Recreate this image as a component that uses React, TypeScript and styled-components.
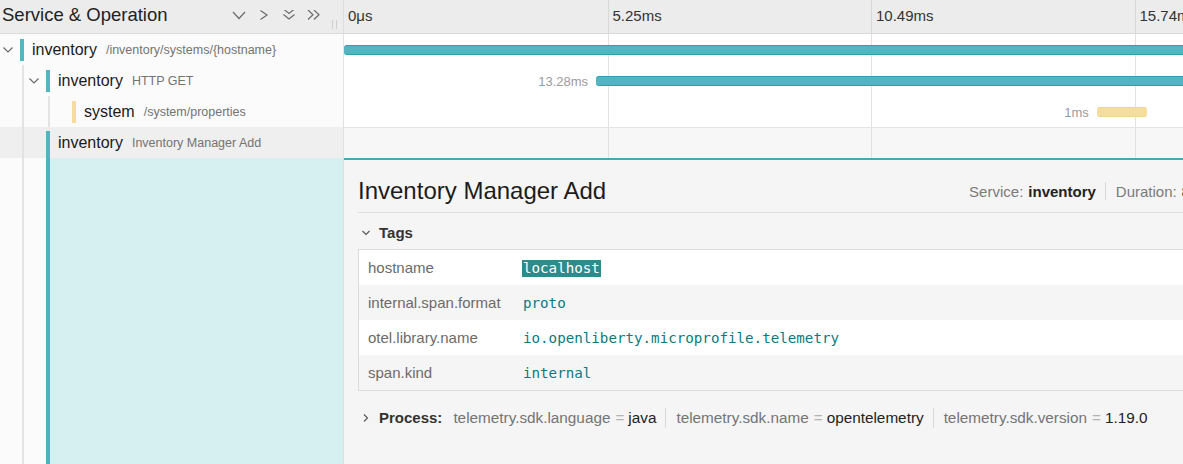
import React from "react";
import styled, { createGlobalStyle } from "styled-components";

const NAME_WIDTH = 344;
const TIMELINE_WIDTH = 1054;
const TOTAL_MS = 20.99;

const COLORS: Record<string, { bar: string; border: string }> = {
  inventory: { bar: "#52b5c0", border: "#27a4b0" },
  system: { bar: "#f4dd9e", border: "#f0d68f" },
};

interface Span {
  service: string;
  operation: string;
  depth: number;
  hasChildren: boolean;
  start: number;
  duration: number;
  label: string;
  selected?: boolean;
}

const spans: Span[] = [
  { service: "inventory", operation: "/inventory/systems/{hostname}", depth: 0, hasChildren: true, start: 0, duration: 20.99, label: "20.99ms" },
  { service: "inventory", operation: "HTTP GET", depth: 1, hasChildren: true, start: 5.02, duration: 13.28, label: "13.28ms" },
  { service: "system", operation: "/system/properties", depth: 2, hasChildren: false, start: 14.99, duration: 1, label: "1ms" },
  { service: "inventory", operation: "Inventory Manager Add", depth: 1, hasChildren: false, start: 20.3, duration: 0.08, label: "82μs", selected: true },
];

const tags = [
  { key: "hostname", value: "localhost", highlight: true },
  { key: "internal.span.format", value: "proto" },
  { key: "otel.library.name", value: "io.openliberty.microprofile.telemetry" },
  { key: "span.kind", value: "internal" },
];

const processTags = [
  { key: "telemetry.sdk.language", value: "java" },
  { key: "telemetry.sdk.name", value: "opentelemetry" },
  { key: "telemetry.sdk.version", value: "1.19.0" },
];

const GlobalStyle = createGlobalStyle`
  html, body {
    margin: 0;
    padding: 0;
    overflow: hidden;
    background: #fff;
  }
  body {
    font-family: "Liberation Sans", Arial, sans-serif;
    color: #222;
  }
`;

const Page = styled.div`
  width: ${NAME_WIDTH + 1 + TIMELINE_WIDTH}px;
  height: 464px;
  display: flex;
  flex-direction: column;
  overflow: hidden;
`;

const Header = styled.div`
  display: flex;
  height: 33px;
  flex: none;
  background: #ececec;
  border-bottom: 1px solid #dadada;
`;

const NameHeader = styled.div`
  width: ${NAME_WIDTH}px;
  flex: none;
  display: flex;
  align-items: center;
  padding: 0 6px 0 2px;
  box-sizing: border-box;
  border-right: 1px solid #dedede;
`;

const HeaderTitle = styled.div`
  flex: 1;
  font-size: 18.5px;
  color: #222;
  margin-bottom: 3px;
`;

const IconBar = styled.div`
  display: flex;
  align-items: center;
  gap: 11px;
`;

const HeaderIcon = styled.svg`
  width: 14px;
  height: 14px;
  fill: none;
  stroke: #6b6b6b;
  stroke-width: 1.2;
  cursor: pointer;
`;

const Grip = styled.div`
  align-self: flex-end;
  margin: 0 0 4px 11px;
  width: 5px;
  height: 9px;
  border-left: 1px solid #cfcfcf;
  border-right: 1px solid #cfcfcf;
  box-sizing: border-box;
`;

const Ticks = styled.div<{ $bg?: string; $topLine?: boolean }>`
  width: ${TIMELINE_WIDTH}px;
  flex: none;
  display: grid;
  grid-template-columns: repeat(4, 1fr);
  position: relative;
  background: ${(p) => p.$bg || "transparent"};
  border-top: ${(p) => (p.$topLine ? "1px solid #e4e4e4" : "none")};
  box-sizing: border-box;
`;

const TickCell = styled.div`
  border-left: 1px solid #e2e2e2;
  &:first-child {
    border-left: none;
  }
`;

const TickLabel = styled(TickCell)`
  display: flex;
  align-items: center;
  padding: 0 0 2px 4px;
  font-size: 15px;
  color: #333;
  border-left-color: #d8d8d8;
  white-space: nowrap;
  overflow: hidden;
`;

const Row = styled.div`
  display: flex;
  height: 31px;
  flex: none;
`;

const NameCell = styled.div<{ $selected?: boolean }>`
  width: ${NAME_WIDTH}px;
  flex: none;
  display: flex;
  align-items: stretch;
  box-sizing: border-box;
  border-right: 1px solid #e2e2e2;
  background: ${(p) => (p.$selected ? "#efefef" : "#fbfbfb")};
  overflow: hidden;
  white-space: nowrap;
`;

const Guide = styled.span`
  width: 22px;
  flex: none;
  margin-right: 2px;
  border-right: 2px solid #e3e3e3;
`;

const ToggleSlot = styled.span`
  width: 20px;
  flex: none;
  display: flex;
  align-items: center;
  padding-left: 3px;
  box-sizing: border-box;
`;

const Chevron = styled.svg`
  fill: none;
  stroke: #666;
  stroke-width: 1.1;
`;

const ServiceMark = styled.span<{ $color: string; $tall?: boolean }>`
  width: 4px;
  flex: none;
  align-self: ${(p) => (p.$tall ? "flex-end" : "center")};
  height: ${(p) => (p.$tall ? "27px" : "22px")};
  background: ${(p) => p.$color};
  margin-right: 8px;
`;

const NameText = styled.span`
  display: flex;
  align-items: center;
`;

const ServiceName = styled.span`
  font-size: 16px;
  color: #1a1a1a;
`;

const OperationName = styled.span`
  font-size: 12.5px;
  color: #737373;
  margin-left: 9px;
`;

const Lane = styled.div`
  position: absolute;
  inset: 0;
  overflow: hidden;
`;

const SpanBar = styled.div<{ $color: string; $border: string }>`
  position: absolute;
  top: 50%;
  height: 10px;
  transform: translateY(-50%);
  background: ${(p) => p.$color};
  border-top: 1px solid ${(p) => p.$border};
  border-bottom: 1px solid ${(p) => p.$border};
  border-radius: 3px;
  box-sizing: border-box;
`;

const DurationLabel = styled.div`
  position: absolute;
  top: 50%;
  transform: translateY(-50%);
  font-size: 13px;
  color: #9b9b9b;
  white-space: nowrap;
`;

const DetailRow = styled.div`
  display: flex;
  flex: 1;
  min-height: 0;
`;

const DetailName = styled.div`
  width: ${NAME_WIDTH}px;
  flex: none;
  display: flex;
  box-sizing: border-box;
  border-right: 1px solid #dedede;
  background: #fbfbfb;
`;

const DetailSlot = styled.span`
  width: 20px;
  flex: none;
`;

const DetailAccent = styled.span`
  width: 4px;
  flex: none;
  background: #4db3be;
`;

const DetailFill = styled.div`
  flex: 1;
  background: #d6f0f2;
`;

const DetailPanel = styled.div`
  width: ${TIMELINE_WIDTH}px;
  flex: none;
  box-sizing: border-box;
  background: #f5f5f5;
  border-top: 2px solid #3fadb8;
  padding: 0 14px;
`;

const TitleRow = styled.div`
  display: flex;
  align-items: center;
  padding: 17px 0 7px;
  border-bottom: 1px solid #dcdcdc;
`;

const Title = styled.h2`
  flex: 1;
  margin: 0;
  font-size: 24px;
  line-height: 28px;
  font-weight: normal;
  color: #1c1c1c;
`;

const Overview = styled.div`
  display: flex;
  align-items: center;
  padding-right: 3px;
  font-size: 15px;
  white-space: nowrap;
`;

const OverviewLabel = styled.span`
  color: #7a7a7a;
`;

const OverviewValue = styled.strong`
  color: #222;
  margin-left: 5px;
`;

const Sep = styled.span<{ $h?: number }>`
  width: 1px;
  height: ${(p) => p.$h || 18}px;
  background: #d8d8d8;
  margin: 0 10px 0 9px;
`;

const SectionHeader = styled.div<{ $gapTop: number; $gapBottom: number }>`
  display: flex;
  align-items: center;
  line-height: 20px;
  padding: ${(p) => p.$gapTop}px 0 ${(p) => p.$gapBottom}px 4px;
`;

const SectionChevron = styled.svg`
  width: 8px;
  height: 8px;
  margin-right: 9px;
  fill: none;
  stroke: #555;
  stroke-width: 1.1;
`;

const SectionLabel = styled.span`
  font-size: 15px;
  font-weight: bold;
  color: #333;
`;

const TagTable = styled.div`
  border: 1px solid #dcdcdc;
  border-right: none;
`;

const TagRow = styled.div`
  display: grid;
  grid-template-columns: 154px 1fr;
  height: 35px;
  align-items: center;
  background: #fff;
  &:nth-child(even) {
    background: #f5f5f5;
  }
`;

const TagKey = styled.div`
  padding-left: 9px;
  font-size: 15px;
  color: #6b6b6b;
  white-space: nowrap;
`;

const TagValue = styled.div`
  padding-left: 10px;
  font-family: "DejaVu Sans Mono", "Liberation Mono", monospace;
  font-size: 14.2px;
  color: #0b7a80;
  white-space: nowrap;
`;

const Highlight = styled.span`
  background: #2e8b8c;
  color: #fff;
  padding: 0 1px 1px;
  margin-left: -1px;
`;

const ProcessItems = styled.div`
  display: flex;
  align-items: center;
  margin-left: 11px;
  font-size: 15.3px;
  white-space: nowrap;
`;

const ProcKey = styled.span`
  color: #747474;
`;

const ProcEq = styled.span`
  color: #b3b3b3;
  margin: 0 4px 0 5px;
`;

const ProcValue = styled.span`
  color: #222;
`;

const DownIcon = () => (
  <HeaderIcon viewBox="0 0 14 14">
    <path d="M1 2 L7 8.5 L13 2" />
  </HeaderIcon>
);

const RightIcon = () => (
  <HeaderIcon viewBox="0 0 14 14">
    <path d="M3.5 0.5 L10 5 L3.5 9.5" />
  </HeaderIcon>
);

const DoubleDownIcon = () => (
  <HeaderIcon viewBox="0 0 14 14">
    <path d="M1.5 -1 L7 3.5 L12.5 -1 M1.5 4.5 L7 9 L12.5 4.5" />
  </HeaderIcon>
);

const DoubleRightIcon = () => (
  <HeaderIcon viewBox="0 0 14 14">
    <path d="M1 0 L6 4.75 L1 9.5 M7 0 L12 4.75 L7 9.5" />
  </HeaderIcon>
);

const px = (ms: number) => (ms / TOTAL_MS) * TIMELINE_WIDTH;

const TickGrid: React.FC<{ bg?: string; topLine?: boolean; children?: React.ReactNode }> = ({ bg, topLine, children }) => (
  <Ticks $bg={bg} $topLine={topLine}>
    <TickCell />
    <TickCell />
    <TickCell />
    <TickCell />
    <Lane>{children}</Lane>
  </Ticks>
);

const SpanRow: React.FC<{ span: Span }> = ({ span }) => {
  const color = COLORS[span.service];
  const left = px(span.start);
  const width = Math.max(px(span.duration), 4);
  return (
    <Row>
      <NameCell $selected={span.selected}>
        {Array.from({ length: span.depth }).map((_, i) => (
          <Guide key={i} />
        ))}
        <ToggleSlot>
          {span.hasChildren && (
            <Chevron width="10" height="6" viewBox="0 0 10 6">
              <path d="M0.5 0.5 L5 5 L9.5 0.5" />
            </Chevron>
          )}
        </ToggleSlot>
        <ServiceMark $color={color.bar} $tall={span.selected} />
        <NameText>
          <ServiceName>{span.service}</ServiceName>
          <OperationName>{span.operation}</OperationName>
        </NameText>
      </NameCell>
      <TickGrid bg={span.selected ? "#f7f7f7" : "#fff"} topLine={span.selected}>
        {span.start > 0 && (
          <DurationLabel style={{ right: TIMELINE_WIDTH - left + 8 }}>{span.label}</DurationLabel>
        )}
        <SpanBar $color={color.bar} $border={color.border} style={{ left, width }} />
      </TickGrid>
    </Row>
  );
};

const App: React.FC = () => {
  return (
    <>
      <GlobalStyle />
      <Page>
        <Header>
          <NameHeader>
            <HeaderTitle>Service &amp; Operation</HeaderTitle>
            <IconBar>
              <DownIcon />
              <RightIcon />
              <DoubleDownIcon />
              <DoubleRightIcon />
            </IconBar>
            <Grip />
          </NameHeader>
          <Ticks>
            <TickLabel>0μs</TickLabel>
            <TickLabel>5.25ms</TickLabel>
            <TickLabel>10.49ms</TickLabel>
            <TickLabel>15.74ms</TickLabel>
          </Ticks>
        </Header>

        {spans.map((s, i) => (
          <SpanRow key={i} span={s} />
        ))}

        <DetailRow>
          <DetailName>
            <Guide />
            <DetailSlot />
            <DetailAccent />
            <DetailFill />
          </DetailName>
          <DetailPanel>
            <TitleRow>
              <Title>Inventory Manager Add</Title>
              <Overview>
                <OverviewLabel>Service:</OverviewLabel>
                <OverviewValue>inventory</OverviewValue>
                <Sep />
                <OverviewLabel>Duration:</OverviewLabel>
                <OverviewValue>82μs</OverviewValue>
                <Sep />
                <OverviewLabel>Start Time:</OverviewLabel>
                <OverviewValue>20.297ms</OverviewValue>
              </Overview>
            </TitleRow>

            <SectionHeader $gapTop={10} $gapBottom={6}>
              <SectionChevron viewBox="0 0 8 8">
                <path d="M0.5 2 L4 5.5 L7.5 2" />
              </SectionChevron>
              <SectionLabel>Tags</SectionLabel>
            </SectionHeader>
            <TagTable>
              {tags.map((t) => (
                <TagRow key={t.key}>
                  <TagKey>{t.key}</TagKey>
                  <TagValue>{t.highlight ? <Highlight>{t.value}</Highlight> : t.value}</TagValue>
                </TagRow>
              ))}
            </TagTable>

            <SectionHeader $gapTop={17} $gapBottom={0}>
              <SectionChevron viewBox="0 0 8 8">
                <path d="M2 0.5 L5.5 4 L2 7.5" />
              </SectionChevron>
              <SectionLabel>Process:</SectionLabel>
              <ProcessItems>
                {processTags.map((p, i) => (
                  <React.Fragment key={p.key}>
                    {i > 0 && <Sep $h={20} />}
                    <ProcKey>{p.key}</ProcKey>
                    <ProcEq>=</ProcEq>
                    <ProcValue>{p.value}</ProcValue>
                  </React.Fragment>
                ))}
              </ProcessItems>
            </SectionHeader>
          </DetailPanel>
        </DetailRow>
      </Page>
    </>
  );
};

export default App;
